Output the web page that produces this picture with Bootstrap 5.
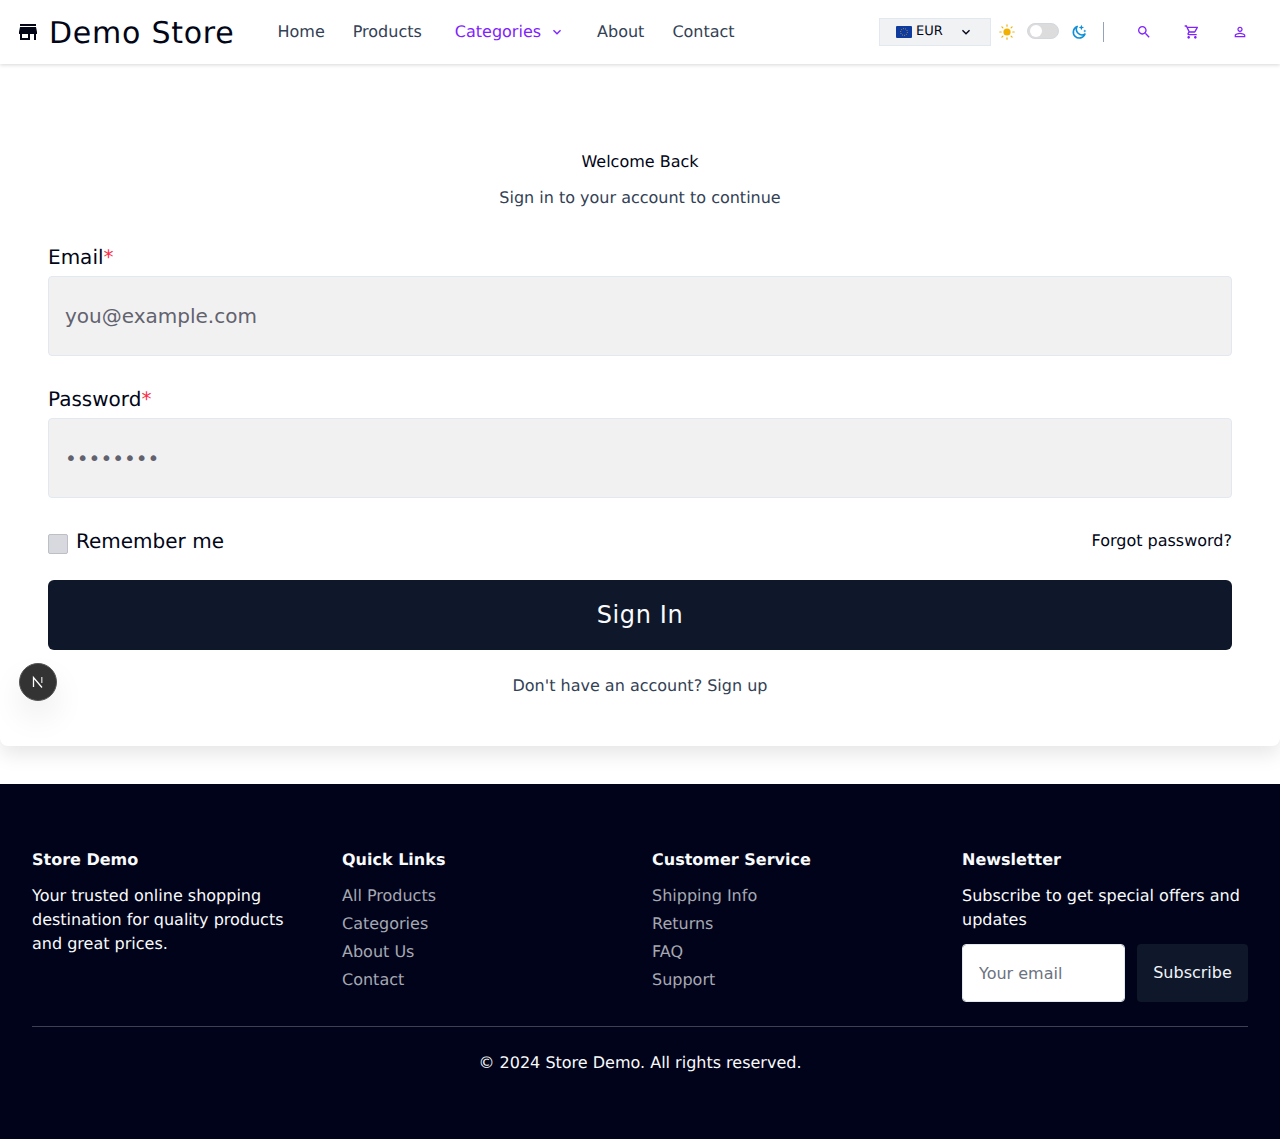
<!DOCTYPE html>
<html lang="en">
<head>
  <meta charset="UTF-8">
  <title>Demo Store - Sign In</title>
  <link href="https://cdn.jsdelivr.net/npm/bootstrap@5.3.3/dist/css/bootstrap.min.css" rel="stylesheet">
  <style>
    body { font-family: "DejaVu Sans", sans-serif; font-size: 16px; line-height: 24px; color: #020617; background: #fff; text-rendering: geometricPrecision; }

    /* top bar */
    .top-bar { height: 64px; padding: 0 16px; background: #fff; box-shadow: 0 1px 4px rgba(0, 0, 0, .16); position: relative; z-index: 2; }
    .brand-name { font-size: 30px; line-height: 36px; letter-spacing: .025em; color: #020617; margin: 3px 29px 0 9px; }
    .top-link { color: #334155; padding: 0 14px; text-decoration: none; }
    .top-link-active { color: #7f22fe; padding: 0 16px; margin: 0 2px 0 3px; display: flex; align-items: center; gap: 8px; text-decoration: none; }
    .cur-select { width: 112px; height: 28px; background: #f1f2f4; border: 1px solid #e2e8f0; font-size: 13px; color: #020617; padding: 0 16px; margin-right: 8px; }
    .cur-flag { width: 16px; height: 12px; margin-right: 4px; }
    .theme-track { width: 32px; height: 16px; border-radius: 8px; background: #dcdcdc; border: 1px solid #d3d8df; margin: -2px 12px 0; padding: 1px 2px; }
    .theme-knob { width: 12px; height: 12px; border-radius: 50%; background: #fff; display: block; }
    .top-rule { width: 1px; height: 20px; background: #94a3b8; margin: 0 16px; }
    .top-icon { width: 48px; height: 48px; color: #7f22fe; }
    .top-icon svg { width: 16px; height: 16px; fill: currentColor; }

    /* sign in panel */
    .signin-panel { height: 682px; margin-bottom: 38px; padding: 86px 48px 0; background: #fff; border-radius: 0 0 8px 8px; box-shadow: 0 8px 20px rgba(0, 0, 0, .1); }
    .signin-sub { color: #334155; margin: 12px 0 32px; }
    .field-label { font-size: 20px; line-height: 30px; margin-bottom: 4px; display: block; color: #020617; }
    .field-label span { color: #fb2c46; }
    .field-input { height: 80px; font-size: 20px; line-height: 30px; padding: 0 16px; background: #f1f1f2; border: 1px solid #e2e8f0; border-radius: 4px; color: #020617; margin-bottom: 28px; }
    .field-input::placeholder { color: #62626e; opacity: 1; }
    .field-input:focus { background: #f1f1f2; }
    .remember-row { height: 30px; margin-bottom: 24px; }
    .remember-box.form-check-input { width: 20px; height: 20px; margin: 8px 8px 0 0; background-color: #d7d9de; border: 1px solid #bcbfc6; border-radius: 2px; }
    .remember-text { font-size: 20px; line-height: 30px; }
    .forgot-link { color: #020617; text-decoration: none; margin-top: 3px; }
    .signin-btn { height: 70px; font-size: 24px; letter-spacing: .025em; background: #0f172a; border: 0; border-radius: 6px; color: #f8fafc; }
    .signup-line { color: #334155; margin-top: 24px; }
    .signup-line a { color: inherit; text-decoration: none; }

    /* dev tools badge */
    .dev-badge { position: absolute; left: 19px; top: 663px; width: 38px; height: 38px; border-radius: 50%; background: #333; border: 1px solid #555; box-shadow: 0 16px 32px rgba(0, 0, 0, .08); z-index: 3; }

    /* footer */
    .shop-footer { height: 355px; background: #000319; color: #f8fafc; padding: 64px 32px 0; }
    .foot-title { font-weight: 700; font-size: 16px; margin-bottom: 12px; }
    .foot-links a { display: block; color: #a6a8b3; text-decoration: none; margin-bottom: 4px; }
    .foot-text { margin: 0 0 12px; }
    .news-input { width: 163px; height: 58px; font-size: 16px; padding: 0 16px; border: 1px solid #e2e8f0; border-radius: 4px; }
    .news-input::placeholder { color: #6b7280; opacity: 1; }
    .news-btn { height: 58px; width: 111px; padding: 0; background: #0f172a; border: 0; border-radius: 4px; color: #f1f5f9; }
    .foot-rule { margin: 24px 0; border: 0; border-top: 1px solid #3f4150; opacity: 1; }
  </style>
</head>
<body class="position-relative">

  <!-- top bar -->
  <header class="top-bar d-flex align-items-center">
    <svg width="24" height="24" viewBox="0 0 24 24" fill="#020617"><path d="M20 4H4v2h16V4zm1 10v-2l-1-5H4l-1 5v2h1v6h10v-6h4v6h2v-6h1zm-9 4H6v-4h6v4z"/></svg>
    <span class="brand-name">Demo Store</span>
    <nav class="d-flex align-items-center">
      <a class="top-link" href="#">Home</a>
      <a class="top-link" href="#">Products</a>
      <a class="top-link-active" href="#">Categories
        <svg width="16" height="16" viewBox="0 0 24 24" fill="currentColor"><path d="M7.41 8.59 12 13.17l4.59-4.58L18 10l-6 6-6-6z"/></svg>
      </a>
      <a class="top-link" href="#">About</a>
      <a class="top-link" href="#">Contact</a>
    </nav>
    <div class="ms-auto d-flex align-items-center">
      <div class="cur-select d-flex align-items-center">
        <svg class="cur-flag" viewBox="0 0 16 12"><rect width="16" height="12" rx="1" fill="#0f3a9e"/><circle cx="8" cy="6" r="3.4" fill="none" stroke="#d9b92e" stroke-width=".8" stroke-dasharray=".9 1.2"/></svg>
        <span>EUR</span>
        <svg class="ms-auto" width="16" height="16" viewBox="0 0 24 24" fill="#020617"><path d="M7.41 8.59 12 13.17l4.59-4.58L18 10l-6 6-6-6z"/></svg>
      </div>
      <svg width="16" height="16" viewBox="0 0 16 16" fill="#f0b100"><circle cx="8" cy="8" r="3.6"/><g stroke="#f0b100" stroke-width="1.2" stroke-linecap="round"><path d="M8 .8v1.4M8 13.8v1.4M.8 8h1.4M13.8 8h1.4M2.9 2.9l1 1M12.1 12.1l1 1M2.9 13.1l1-1M12.1 3.9l1-1"/></g></svg>
      <span class="theme-track d-block"><span class="theme-knob"></span></span>
      <svg width="16" height="16" viewBox="0 0 16 16"><path d="M6.2 2.4A6 6 0 1 0 14 10a5.6 5.6 0 0 1-7.8-7.6z" fill="none" stroke="#0f8fd8" stroke-width="1.6" stroke-linejoin="round"/><path d="M10.4 .8l.8 1.9 1.9.8-1.9.8-.8 1.9-.8-1.9-1.9-.8 1.9-.8zM13.8 5.4l.5 1.1 1.1.5-1.1.5-.5 1.1-.5-1.1-1.1-.5 1.1-.5z" fill="#0f8fd8"/></svg>
      <span class="top-rule"></span>
      <a class="top-icon d-flex align-items-center justify-content-center" href="#"><svg viewBox="0 0 24 24"><path d="M15.5 14h-.79l-.28-.27C15.41 12.59 16 11.11 16 9.5 16 5.91 13.09 3 9.5 3S3 5.91 3 9.5 5.91 16 9.5 16c1.61 0 3.09-.59 4.23-1.57l.27.28v.79l5 4.99L20.49 19l-4.99-5zm-6 0C7.01 14 5 11.99 5 9.5S7.01 5 9.5 5 14 7.01 14 9.5 11.99 14 9.5 14z"/></svg></a>
      <a class="top-icon d-flex align-items-center justify-content-center" href="#"><svg viewBox="0 0 24 24"><path d="M15.55 13c.75 0 1.41-.41 1.75-1.03l3.58-6.49c.37-.66-.11-1.48-.87-1.48H5.21l-.94-2H1v2h2l3.6 7.59-1.35 2.44C4.52 15.37 5.48 17 7 17h12v-2H7l1.1-2h7.45zM6.16 6h12.15l-2.76 5H8.53L6.16 6zM7 18c-1.1 0-1.99.9-1.99 2S5.9 22 7 22s2-.9 2-2-.9-2-2-2zm10 0c-1.1 0-1.99.9-1.99 2s.89 2 1.99 2 2-.9 2-2-.9-2-2-2z"/></svg></a>
      <a class="top-icon d-flex align-items-center justify-content-center" href="#"><svg viewBox="0 0 24 24"><path d="M12 5.9c1.16 0 2.1.94 2.1 2.1s-.94 2.1-2.1 2.1S9.9 9.16 9.9 8s.94-2.1 2.1-2.1m0 9c2.97 0 6.1 1.46 6.1 2.1v1.1H5.9V17c0-.64 3.13-2.1 6.1-2.1M12 4C9.79 4 8 5.79 8 8s1.79 4 4 4 4-1.79 4-4-1.79-4-4-4zm0 9c-2.67 0-8 1.34-8 4v3h16v-3c0-2.66-5.33-4-8-4z"/></svg></a>
    </div>
  </header>

  <!-- sign in form -->
  <main class="signin-panel">
    <div class="text-center">Welcome Back</div>
    <p class="signin-sub text-center">Sign in to your account to continue</p>
    <form>
      <label class="field-label" for="email">Email<span>*</span></label>
      <input type="email" id="email" class="form-control field-input" placeholder="you@example.com">
      <label class="field-label" for="password">Password<span>*</span></label>
      <input type="password" id="password" class="form-control field-input" placeholder="••••••••">
      <div class="remember-row d-flex justify-content-between align-items-start">
        <div class="d-flex">
          <input type="checkbox" id="remember" class="form-check-input remember-box">
          <label class="remember-text" for="remember">Remember me</label>
        </div>
        <a class="forgot-link" href="#">Forgot password?</a>
      </div>
      <button type="button" class="btn signin-btn w-100">Sign In</button>
    </form>
    <div class="signup-line text-center">Don't have an account? <a href="#">Sign up</a></div>
  </main>

  <div class="dev-badge d-flex align-items-center justify-content-center">
    <svg width="14" height="14" viewBox="0 0 14 14" fill="none" stroke="#fff" stroke-width="1.3"><path d="M2.5 12V2.5L11 12.5"/><path d="M10.8 2v6" stroke-opacity=".8"/></svg>
  </div>

  <!-- footer -->
  <footer class="shop-footer">
    <div class="row g-4">
      <div class="col-3">
        <div class="foot-title">Store Demo</div>
        <p class="foot-text">Your trusted online shopping destination for quality products and great prices.</p>
      </div>
      <div class="col-3">
        <div class="foot-title">Quick Links</div>
        <div class="foot-links">
          <a href="#">All Products</a>
          <a href="#">Categories</a>
          <a href="#">About Us</a>
          <a href="#">Contact</a>
        </div>
      </div>
      <div class="col-3">
        <div class="foot-title">Customer Service</div>
        <div class="foot-links">
          <a href="#">Shipping Info</a>
          <a href="#">Returns</a>
          <a href="#">FAQ</a>
          <a href="#">Support</a>
        </div>
      </div>
      <div class="col-3">
        <div class="foot-title">Newsletter</div>
        <p class="foot-text">Subscribe to get special offers and updates</p>
        <div class="d-flex gap-2 justify-content-between">
          <input type="email" class="form-control news-input" placeholder="Your email">
          <button type="button" class="btn news-btn">Subscribe</button>
        </div>
      </div>
    </div>
    <hr class="foot-rule">
    <div class="text-center">© 2024 Store Demo. All rights reserved.</div>
  </footer>

</body>
</html>
